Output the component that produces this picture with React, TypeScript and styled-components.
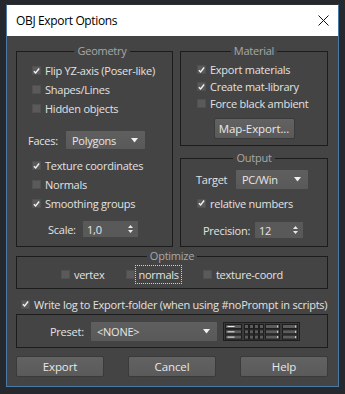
import React from 'react';
import styled, { createGlobalStyle } from 'styled-components';

const FONT = `"Open Sans", "Noto Sans", "Liberation Sans", sans-serif`;

const Global = createGlobalStyle`
  html, body { margin: 0; padding: 0; background: #25292d; }
  body { width: 345px; height: 394px; overflow: hidden; font-family: ${FONT}; }
  * { box-sizing: border-box; }
`;

const Screen = styled.div`
  width: 345px;
  height: 394px;
  padding: 4px 0 0 6px;
  background: #25292d;
`;

const Window = styled.div`
  width: 333px;
  display: flex;
  flex-direction: column;
  border: 1px solid #4a7aa3;
  border-top-color: #2c3034;
`;

const TitleBar = styled.div`
  height: 31px;
  background: #ffffff;
  display: flex;
  align-items: center;
  justify-content: space-between;
  padding: 0 9px 0 9px;
  font-size: 12px;
  letter-spacing: -0.35px;
  color: #000;
`;

const Body = styled.div`
  background: #444444;
  padding: 8px 10px 9px 9px;
  display: flex;
  flex-direction: column;
  color: #e2e2e2;
  font-size: 11px;
  letter-spacing: -0.25px;
`;

const TopGrid = styled.div`
  display: grid;
  grid-template-columns: 157px 148px;
  column-gap: 7px;
`;

const Column = styled.div`
  display: flex;
  flex-direction: column;
  gap: 5px;
`;

const Group = styled.fieldset<{ $pad: string }>`
  margin: 0;
  min-width: 0;
  padding: ${(p) => p.$pad};
  border: 1px solid #1c1c1c;
  display: flex;
  flex-direction: column;
`;

const Legend = styled.legend`
  margin: 0 auto;
  padding: 0 3px;
  font-size: 11px;
  line-height: 14px;
  color: #a8a8a8;
`;

const Row = styled.div<{ $h: number; $mt?: number; $ml?: number }>`
  height: ${(p) => p.$h}px;
  margin-top: ${(p) => p.$mt ?? 0}px;
  margin-left: ${(p) => p.$ml ?? 0}px;
  display: flex;
  align-items: center;
  white-space: nowrap;
`;

const Box = styled.span`
  width: 9px;
  height: 9px;
  background: #5a5a5a;
  border: 1px solid #505050;
  display: inline-flex;
  align-items: center;
  justify-content: center;
  flex: none;
  margin-right: 4px;
`;

const CheckLabel = styled.span<{ $focus?: boolean }>`
  line-height: 17px;
  padding: 0 ${(p) => (p.$focus ? 2 : 0)}px;
  margin-left: ${(p) => (p.$focus ? -3 : 0)}px;
  outline: ${(p) => (p.$focus ? '1px dotted #d0d0d0' : 'none')};
`;

const Label = styled.span<{ $w: number }>`
  width: ${(p) => p.$w}px;
  flex: none;
`;

const Select = styled.div<{ $w: number; $h: number }>`
  width: ${(p) => p.$w}px;
  height: ${(p) => p.$h}px;
  background: linear-gradient(#5f5f5f, #595959);
  border-radius: 1px;
  display: flex;
  align-items: center;
  justify-content: space-between;
  padding: 0 7px 0 6px;
  color: #e6e6e6;
  flex: none;
`;

const Spinner = styled.div<{ $w: number }>`
  width: ${(p) => p.$w}px;
  height: 16px;
  background: #595959;
  display: flex;
  align-items: center;
  justify-content: space-between;
  padding: 0 5px 0 4px;
  color: #e6e6e6;
  flex: none;
`;

const Button = styled.div<{ $w: number; $mt?: number }>`
  width: ${(p) => p.$w}px;
  height: 21px;
  margin-top: ${(p) => p.$mt ?? 0}px;
  background: linear-gradient(#626262, #5a5a5a);
  border: 1px solid #3a3a3a;
  border-radius: 2px;
  display: flex;
  align-items: center;
  justify-content: center;
  color: #e8e8e8;
  font-size: 11.5px;
  letter-spacing: -0.1px;
  flex: none;
`;

const CenterRow = styled.div`
  display: flex;
  justify-content: center;
  gap: 22px;
  height: 19px;
  align-items: center;
`;

const PresetBox = styled.div`
  margin-top: 1px;
  height: 34px;
  border: 1px solid #1c1c1c;
  display: flex;
  align-items: center;
  padding-left: 33px;
  gap: 6px;
`;

const ButtonRow = styled.div`
  margin-top: 8px;
  display: flex;
  justify-content: space-between;
`;

const Tick = () => (
  <svg width="8" height="8" viewBox="0 0 8 8">
    <path d="M1 4.2 L3 6.3 L7 1.2" fill="none" stroke="#f2f2f2" strokeWidth="1.6" />
  </svg>
);

const Check = ({
  checked,
  label,
  h,
  mt,
  ml,
  focus,
}: {
  checked?: boolean;
  label: string;
  h: number;
  mt?: number;
  ml?: number;
  focus?: boolean;
}) => (
  <Row $h={h} $mt={mt} $ml={ml}>
    <Box>{checked ? <Tick /> : null}</Box>
    <CheckLabel $focus={focus}>{label}</CheckLabel>
  </Row>
);

const Arrow = () => (
  <svg width="7" height="5" viewBox="0 0 7 5">
    <path d="M0 0 H7 L3.5 4.5 Z" fill="#f0f0f0" />
  </svg>
);

const SpinArrows = () => (
  <svg width="5" height="10" viewBox="0 0 5 10">
    <path d="M0 4 L2.5 1 L5 4 Z M0 6 L2.5 9 L5 6 Z" fill="#e8e8e8" />
  </svg>
);

const CloseX = () => (
  <svg width="11" height="11" viewBox="0 0 11 11">
    <path d="M0.5 0.5 L10.5 10.5 M10.5 0.5 L0.5 10.5" stroke="#111" strokeWidth="1" />
  </svg>
);

const PresetIcon = () => {
  const rows = [0, 1, 2];
  return (
    <svg width="77" height="19" viewBox="0 0 77 19">
      <rect x="0.5" y="0.5" width="76" height="18" fill="#3a3a3a" stroke="#1e1e1e" />
      {rows.map((r) => {
        const y = 2 + r * 5.3;
        return (
          <g key={r}>
            <rect x="2.5" y={y + 0.5} width="16" height="4" fill="#5c5c5c" stroke="#1e1e1e" />
            <rect x="4.5" y={y + 2} width="7" height="1" fill="#e8e8e8" />
            {[0, 1, 2, 3].map((c) => (
              <rect key={c} x={21.5 + c * 5} y={y + 0.5} width="4" height="4" fill="#5c5c5c" stroke="#1e1e1e" />
            ))}
            <rect x="42.5" y={y + 0.5} width="14" height="4" fill="#5c5c5c" stroke="#1e1e1e" />
            <rect x="54" y={y + 1.5} width="1" height="2" fill="#cfcfcf" />
            <rect x="59.5" y={y + 0.5} width="15" height="4" fill="#5c5c5c" stroke="#1e1e1e" />
            <rect x="72" y={y + 1.5} width="1" height="2" fill="#cfcfcf" />
          </g>
        );
      })}
    </svg>
  );
};

export default function App() {
  return (
    <Screen>
      <Global />
      <Window>
        <TitleBar>
          <span>OBJ Export Options</span>
          <CloseX />
        </TitleBar>
        <Body>
          <TopGrid>
            <Group $pad="3px 0 6px 15px">
              <Legend>Geometry</Legend>
              <Check h={19} checked label="Flip YZ-axis (Poser-like)" />
              <Check h={19} label="Shapes/Lines" />
              <Check h={19} label="Hidden objects" />
              <Row $h={18} $mt={13} $ml={-4}>
                <Label $w={38}>Faces:</Label>
                <Select $w={79} $h={18}>
                  <span>Polygons</span>
                  <Arrow />
                </Select>
              </Row>
              <Check h={19} mt={7} checked label="Texture coordinates" />
              <Check h={19} label="Normals" />
              <Check h={19} checked label="Smoothing groups" />
              <Row $h={16} $mt={8} $ml={16}>
                <Label $w={35}>Scale:</Label>
                <Spinner $w={55}>
                  <span>1,0</span>
                  <SpinArrows />
                </Spinner>
              </Row>
            </Group>
            <Column>
              <Group $pad="3px 0 6px 0">
                <Legend>Material</Legend>
                <Check h={17} ml={16} checked label="Export materials" />
                <Check h={17} ml={16} checked label="Create mat-library" />
                <Check h={17} ml={16} label="Force black ambient" />
                <Row $h={21} $mt={6} style={{ justifyContent: 'center' }}>
                  <Button $w={81}>Map-Export...</Button>
                </Row>
              </Group>
              <Group $pad="5px 0 8px 0">
                <Legend>Output</Legend>
                <Row $h={19} $ml={15}>
                  <Label $w={40}>Target</Label>
                  <Select $w={72} $h={19}>
                    <span>PC/Win</span>
                    <Arrow />
                  </Select>
                </Row>
                <Check h={18} mt={5} ml={16} checked label="relative numbers" />
                <Row $h={16} $mt={10} $ml={22}>
                  <Label $w={52}>Precision:</Label>
                  <Spinner $w={48}>
                    <span>12</span>
                    <SpinArrows />
                  </Spinner>
                </Row>
              </Group>
            </Column>
          </TopGrid>
          <Group $pad="2px 0 4px 0" style={{ marginTop: 2 }}>
            <Legend>Optimize</Legend>
            <CenterRow>
              <Check h={19} label="vertex" />
              <Check h={19} focus label="normals" />
              <Check h={19} label="texture-coord" />
            </CenterRow>
          </Group>
          <Check h={18} mt={6} ml={5} checked label="Write log to Export-folder (when using #noPrompt in scripts)" />
          <PresetBox>
            <Label $w={35}>Preset:</Label>
            <Select $w={126} $h={19}>
              <span>&lt;NONE&gt;</span>
              <Arrow />
            </Select>
            <PresetIcon />
          </PresetBox>
          <ButtonRow>
            <Button $w={88}>Export</Button>
            <Button $w={88}>Cancel</Button>
            <Button $w={88}>Help</Button>
          </ButtonRow>
        </Body>
      </Window>
    </Screen>
  );
}
